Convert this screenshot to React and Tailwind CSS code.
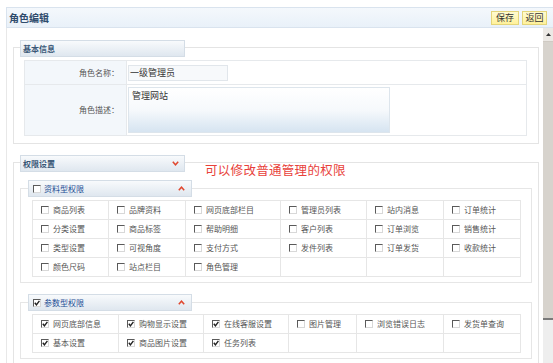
import React from "react";

function Cb({ checked }) {
  return (
    <span className="relative inline-flex items-center justify-center w-[8px] h-[8px] shrink-0 border border-t-[#5a5a5a] border-l-[#5a5a5a] border-r-[#d8d8d8] border-b-[#d8d8d8] bg-white">
      {checked && (
        <svg width="6" height="6" viewBox="0 0 6 6" className="absolute left-[0px] top-[0px]">
          <path d="M0.8 2.8 L2.4 4.8 L5.4 0.8" fill="none" stroke="#222" strokeWidth="1.4" />
        </svg>
      )}
    </span>
  );
}

function Chevron({ up }) {
  return (
    <svg width="7" height="5" viewBox="0 0 7 5">
      <path
        d={up ? "M0.8 4.2 L3.5 1.2 L6.2 4.2" : "M0.8 0.8 L3.5 3.8 L6.2 0.8"}
        fill="none"
        stroke="#e0472e"
        strokeWidth="1.5"
      />
    </svg>
  );
}

function Legend({ children, className = "" }) {
  return (
    <div
      className={
        "h-[17px] flex items-center bg-gradient-to-b from-[#f8fafc] to-[#dfe7ef] border border-[#d4dde6] " +
        className
      }
    >
      {children}
    </div>
  );
}

function Btn({ children, w }) {
  return (
    <div
      className={
        "h-[14px] flex items-center justify-center border border-[#e4d57a] bg-gradient-to-b from-[#fffbd0] to-[#fff19a] text-[9px] text-[#333] " +
        w
      }
    >
      {children}
    </div>
  );
}

function Grid({ widths, rows }) {
  return (
    <table className="border-collapse table-fixed w-[488px]">
      <colgroup>
        {widths.map((w, i) => (
          <col key={i} style={{ width: w }} />
        ))}
      </colgroup>
      <tbody>
        {rows.map((r, ri) => (
          <tr key={ri} className="h-[19px]">
            {widths.map((_, ci) => {
              const item = r[ci];
              return (
                <td key={ci} className="border border-[#e6e6e6] p-0 align-middle">
                  {item && (
                    <div className="flex items-center pl-[8px] gap-[4px] text-[8px] leading-none text-[#555] whitespace-nowrap">
                      <Cb checked={item.c} />
                      <span>{item.t}</span>
                    </div>
                  )}
                </td>
              );
            })}
          </tr>
        ))}
      </tbody>
    </table>
  );
}

const u = (t) => ({ t, c: false });
const k = (t) => ({ t, c: true });

const gridA = [
  [u("商品列表"), u("品牌资料"), u("网页底部栏目"), u("管理员列表"), u("站内消息"), u("订单统计")],
  [u("分类设置"), u("商品标签"), u("帮助明细"), u("客户列表"), u("订单浏览"), u("销售统计")],
  [u("类型设置"), u("可视角度"), u("支付方式"), u("发件列表"), u("订单发货"), u("收款统计")],
  [u("颜色尺码"), u("站点栏目"), u("角色管理"), null, null, null],
];

const gridB = [
  [k("网页底部信息"), k("购物显示设置"), k("在线客服设置"), u("图片管理"), u("浏览错误日志"), u("发货单查询")],
  [k("基本设置"), k("商品图片设置"), k("任务列表"), null, null, null],
];

export default function App() {
  return (
    <div className="w-[553px] h-[363px] bg-white overflow-hidden font-['Noto_Sans_CJK_SC',sans-serif] text-[#444] pt-[7px]">
      {/* title bar */}
      <div className="ml-[6px] h-[21px] flex items-center justify-between border border-r-0 border-[#d9e3ee] bg-gradient-to-b from-[#f4f8fc] to-[#e9f1f9] pl-[2px] pr-[6px]">
        <span className="text-[10px] font-bold text-[#2f4c6d] leading-none">角色编辑</span>
        <div className="flex gap-[3px]">
          <Btn w="w-[28px]">保存</Btn>
          <Btn w="w-[25px]">返回</Btn>
        </div>
      </div>

      <div className="flex h-[335px]">
        <div className="flex-1 ml-[6px] border-l border-[#e8e8e8] pl-[6px] overflow-hidden">
          {/* 基本信息 */}
          <div className="mt-[19px] w-[526px] border border-[#e4e4e4] pb-[7px]">
            <Legend className="-mt-[8px] ml-[6px] w-[165px] pl-[2px]">
              <span className="text-[8px] font-bold text-[#3a5877] leading-none">基本信息</span>
            </Legend>
            <table className="mt-[3px] ml-[10px] w-[503px] border-collapse">
              <tbody>
                <tr className="h-[24px]">
                  <td className="w-[102px] border border-[#e6e9ec] bg-[#f3f7fb] text-right pr-[7px] text-[8px] text-[#555]">
                    角色名称：
                  </td>
                  <td className="border border-[#e6e9ec] pl-[1px] align-middle">
                    <div className="w-[100px] h-[16px] border border-[#e1e6eb] bg-[#f7f9fb] flex items-center pl-[1px] text-[9px] text-[#333] leading-none">
                      一级管理员
                    </div>
                  </td>
                </tr>
                <tr className="h-[51px]">
                  <td className="border border-[#e6e9ec] bg-[#f3f7fb] text-right pr-[7px] text-[8px] text-[#555]">
                    角色描述：
                  </td>
                  <td className="border border-[#e6e9ec] pl-[1px] align-middle">
                    <div className="w-[262px] h-[46px] border border-[#dde5ec] bg-gradient-to-b from-[#ffffff] via-[#f6f9fc] to-[#d6e4f1] pl-[3px] pt-[3px] text-[9px] text-[#333] leading-none">
                      管理网站
                    </div>
                  </td>
                </tr>
              </tbody>
            </table>
          </div>

          {/* 权限设置 */}
          <div className="relative mt-[18px] w-[526px] border border-[#e4e4e4] pb-[8px]">
            <Legend className="-mt-[8px] ml-[6px] w-[165px] pl-[2px] pr-[5px] justify-between">
              <span className="text-[8px] font-bold text-[#3a5877] leading-none">权限设置</span>
              <Chevron />
            </Legend>
            <div className="absolute left-[191px] top-[1px] text-[12.5px] leading-none tracking-[0.3px] text-[#e8413a] whitespace-nowrap">
              可以修改普通管理的权限
            </div>

            {/* 资料型权限 */}
            <div className="mt-[16px] ml-[6px] w-[512px] border border-[#e6e6e6] pb-[5px]">
              <Legend className="-mt-[9px] ml-[7px] w-[164px] pl-[4px] pr-[6px]">
                <Cb />
                <span className="ml-[3px] text-[8px] text-[#1f4f95] leading-none">资料型权限</span>
                <span className="ml-auto flex">
                  <Chevron up />
                </span>
              </Legend>
              <div className="mt-[3px] ml-[11px]">
                <Grid widths={[76, 77, 95, 86, 77, 77]} rows={gridA} />
              </div>
            </div>

            {/* 参数型权限 */}
            <div className="mt-[19px] ml-[6px] w-[512px] border border-[#e6e6e6] pb-[5px]">
              <Legend className="-mt-[9px] ml-[7px] w-[164px] pl-[4px] pr-[6px]">
                <Cb checked />
                <span className="ml-[3px] text-[8px] text-[#1f4f95] leading-none">参数型权限</span>
                <span className="ml-auto flex">
                  <Chevron up />
                </span>
              </Legend>
              <div className="mt-[3px] ml-[11px]">
                <Grid widths={[86, 85, 85, 68, 87, 77]} rows={gridB} />
              </div>
            </div>
          </div>
        </div>

        {/* scrollbar */}
        <div className="w-[10px] h-full flex flex-col bg-[#eeeeee]">
          <div className="h-[14px] flex items-center justify-center bg-[#ece9e5] border-b border-[#cfcac3]">
            <svg width="5" height="3" viewBox="0 0 5 3">
              <path d="M0 3 L2.5 0 L5 3 Z" fill="#333" />
            </svg>
          </div>
          <div className="h-[278px] bg-[#d7d3cd] border-b-2 border-[#7a7a7a]" />
          <div className="flex-1 bg-[#eeeeee]" />
        </div>
      </div>
    </div>
  );
}
